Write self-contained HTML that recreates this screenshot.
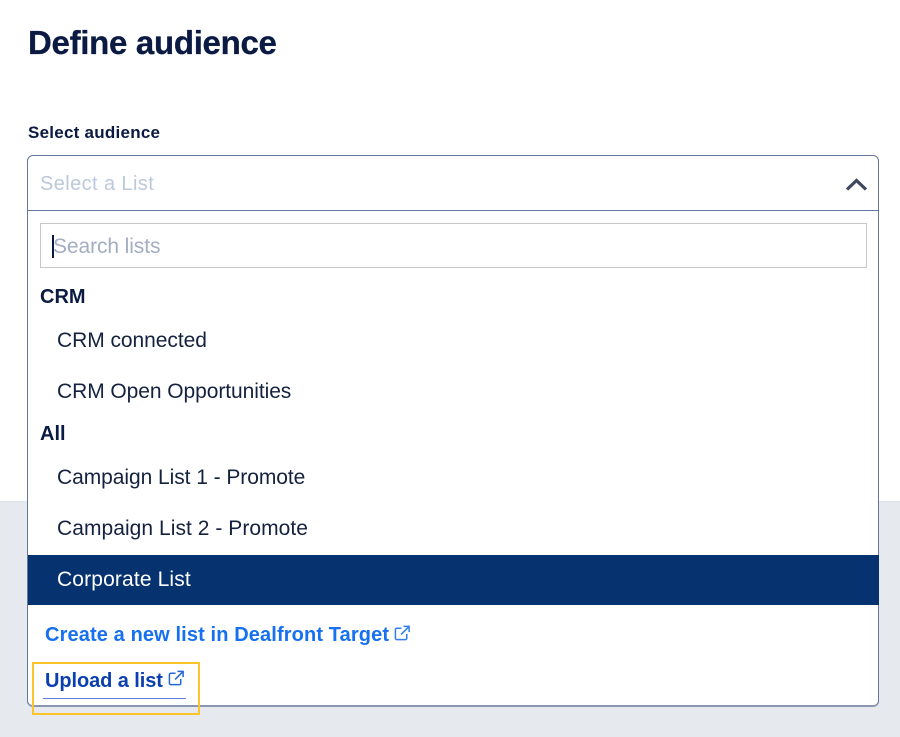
<!DOCTYPE html>
<html>
<head>
<meta charset="utf-8">
<style>
html,body{margin:0;padding:0;}
body{width:900px;height:737px;position:relative;overflow:hidden;background:#fff;font-family:"Liberation Sans",sans-serif;color:#0b1a40;}
#w{position:absolute;left:0;top:0;width:900px;height:737px;filter:blur(0.3px);}
.t{position:absolute;white-space:nowrap;line-height:1;}
.a{position:absolute;}
.i{font-size:21px;color:#14223f;}
</style>
</head>
<body>
<div id="w">
<div class="a" style="left:0;top:501px;width:900px;height:236px;background:#e6e9ee;border-top:1px solid #dfe2e8;box-sizing:border-box;"></div>

<div class="t" style="left:28px;top:26px;font-size:33px;font-weight:700;color:#0a1a42;letter-spacing:-0.3px;-webkit-text-stroke:0.3px #0a1a42;">Define audience</div>
<div class="t" style="left:28px;top:124px;font-size:17px;font-weight:700;color:#0a1a42;letter-spacing:0.25px;">Select audience</div>

<!-- dropdown box -->
<div class="a" style="left:27px;top:155px;width:852px;height:552px;box-sizing:border-box;background:#fff;border:1px solid #64779f;border-bottom:2px solid #8a97b2;border-radius:6px;"></div>
<div class="a" style="left:28px;top:210px;width:850px;height:1px;background:#64779f;"></div>
<div class="t" style="left:40px;top:174px;font-size:20px;color:#bcc8db;letter-spacing:0.4px;">Select a List</div>
<svg class="a" style="left:845px;top:176px;" width="24" height="16" viewBox="0 0 24 16"><path d="M2 13.5 L11.5 4.5 L21 13.5" fill="none" stroke="#3d4a5f" stroke-width="3.2"/></svg>

<!-- search -->
<div class="a" style="left:40px;top:223px;width:827px;height:45px;box-sizing:border-box;border:1px solid #c4c7cc;background:#fff;"></div>
<div class="a" style="left:52px;top:235px;width:1.5px;height:23px;background:#0b1a40;"></div>
<div class="t" style="left:53px;top:236px;font-size:21px;color:#a3aec2;letter-spacing:-0.1px;">Search lists</div>

<div class="t" style="left:40px;top:287px;font-size:20px;font-weight:700;color:#0a1a42;">CRM</div>
<div class="t i" style="left:57px;top:330px;letter-spacing:-0.05px;">CRM connected</div>
<div class="t i" style="left:57px;top:381px;letter-spacing:-0.07px;">CRM Open Opportunities</div>
<div class="t" style="left:40px;top:424px;font-size:20px;font-weight:700;color:#0a1a42;">All</div>
<div class="t i" style="left:57px;top:467px;letter-spacing:-0.06px;">Campaign List 1 - Promote</div>
<div class="t i" style="left:57px;top:518px;letter-spacing:0.05px;">Campaign List 2 - Promote</div>

<div class="a" style="left:28px;top:555px;width:851px;height:50px;background:#06336f;"></div>
<div class="t i" style="left:57px;top:569px;color:#fff;letter-spacing:0.14px;">Corporate List</div>

<div class="t" style="left:45px;top:625px;font-size:20px;font-weight:700;color:#1670f0;letter-spacing:0.12px;">Create a new list in Dealfront Target</div>
<svg class="a" style="left:394px;top:625px;" width="17" height="17" viewBox="0 0 18 18"><path d="M8 3.5 H3 A1.5 1.5 0 0 0 1.5 5 V14 A1.5 1.5 0 0 0 3 15.5 H12 A1.5 1.5 0 0 0 13.5 14 V9.5 M10 1.5 H16 V7.5 M16 1.5 L7.5 10" fill="none" stroke="#2f7ff0" stroke-width="1.6"/></svg>

<div class="t" style="left:45px;top:671px;font-size:20px;font-weight:700;color:#0b3fb0;letter-spacing:-0.08px;">Upload a list</div>
<svg class="a" style="left:168px;top:670px;" width="17" height="17" viewBox="0 0 18 18"><path d="M8 3.5 H3 A1.5 1.5 0 0 0 1.5 5 V14 A1.5 1.5 0 0 0 3 15.5 H12 A1.5 1.5 0 0 0 13.5 14 V9.5 M10 1.5 H16 V7.5 M16 1.5 L7.5 10" fill="none" stroke="#2468d8" stroke-width="1.6"/></svg>
<div class="a" style="left:43px;top:698px;width:143px;height:1px;background:#5f7fdc;"></div>

<!-- highlight -->
<div class="a" style="left:32px;top:662px;width:168px;height:53px;box-sizing:border-box;border:2px solid #fdc32a;"></div>
</div>
</body>
</html>
